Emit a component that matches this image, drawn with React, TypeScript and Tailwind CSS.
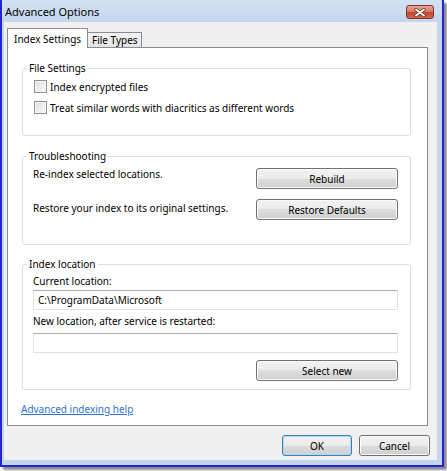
import React from "react";

const btnBase =
  "h-[21px] rounded-[3px] border flex items-center justify-center text-[10px] leading-none text-black bg-[linear-gradient(to_bottom,#f2f2f2_0%,#ebebeb_50%,#dddddd_50%,#cfcfcf_100%)]";

function Button({ label, w, def }: { label: string; w: string; def?: boolean }) {
  return (
    <div
      className={
        btnBase +
        " " +
        w +
        (def
          ? " border-[#3c7fb1] shadow-[inset_0_0_0_1px_#a6dcf6]"
          : " border-[#707070] shadow-[inset_0_0_0_1px_#fbfbfb]")
      }
    >
      {label}
    </div>
  );
}

function Checkbox({ label }: { label: string }) {
  return (
    <div className="h-[21px] flex items-center">
      <div className="w-[13px] h-[13px] border border-[#8e8f8f] bg-[linear-gradient(135deg,#dcdee2_0%,#f9f9f9_100%)] shadow-[inset_0_0_0_1px_#f6f6f6]" />
      <span className="ml-[3px] leading-[16px]">{label}</span>
    </div>
  );
}

function TextBox({ value }: { value?: string }) {
  return (
    <div className="w-[365px] h-[20px] border border-[#dfe3e8] border-t-[#abadb3] bg-white flex items-center pl-[4px] leading-none">
      {value}
    </div>
  );
}

export default function App() {
  return (
    <div className="w-[447px] h-[471px] bg-white font-['Noto_Sans',sans-serif] text-[10px] text-black">
      <div className="w-[444px] h-[467px] flex flex-col bg-[#c3d6ec] border-x-2 border-b-2 border-[#2323d8] shadow-[3px_3px_2px_rgba(0,0,0,0.45)]">
        {/* Title bar */}
        <div className="h-[22px] flex items-start justify-between pl-[3px] pr-[8px] bg-[linear-gradient(to_bottom,#d3e2f2,#c3d6ec)]">
          <div className="mt-[4px] leading-[16px] text-[11px]">Advanced Options</div>
          <div className="mt-[5px] w-[28px] h-[14px] rounded-[3px] border border-[#8a3329] bg-[linear-gradient(to_bottom,#e8a493_0%,#d47a68_45%,#c2412f_55%,#d06a4f_100%)] flex items-center justify-center">
            <svg width="12" height="9" viewBox="0 0 12 9">
              <path d="M2 1.5 L10 7.5 M10 1.5 L2 7.5" stroke="#5a2a25" strokeWidth="3.2" strokeLinecap="round" />
              <path d="M2 1.5 L10 7.5 M10 1.5 L2 7.5" stroke="#ffffff" strokeWidth="1.8" strokeLinecap="round" />
            </svg>
          </div>
        </div>
        {/* Client */}
        <div className="flex-1 ml-[2px] mr-[5px] mb-[5px] bg-[#f0f0f0] pl-[3px] pt-[6px] flex flex-col">
          {/* Tabs */}
          <div className="h-[19px] flex items-end">
            <div className="relative z-10 h-[20px] -mb-px w-[81px] border border-b-0 border-[#898c95] bg-white flex items-start pl-[6px] pt-[2px] leading-[16px]">
              Index Settings
            </div>
            <div className="h-[15px] w-[54px] border-t border-r border-[#898c95] bg-[linear-gradient(to_bottom,#f3f3f3,#e3e3e3)] flex items-start pl-[4px] leading-[14px]">
              File Types
            </div>
          </div>
          {/* Panel */}
          <div className="w-[421px] h-[379px] border border-[#898c95] bg-white flex flex-col pl-[14px]">
            {/* File Settings */}
            <fieldset className="mt-[12px] w-[389px] h-[76px] border border-[#d5dfe5] rounded-[3px] pl-[11px]">
              <legend className="-ml-[7px] px-[2px] leading-[16px]">File Settings</legend>
              <div className="flex flex-col">
                <Checkbox label="Index encrypted files" />
                <Checkbox label="Treat similar words with diacritics as different words" />
              </div>
            </fieldset>
            {/* Troubleshooting */}
            <fieldset className="mt-[12px] w-[389px] h-[97px] border border-[#d5dfe5] rounded-[3px] pl-[10px]">
              <legend className="-ml-[6px] px-[2px] leading-[16px]">Troubleshooting</legend>
              <div className="flex flex-col w-[365px]">
                <div className="flex items-start justify-between mt-[2px]">
                  <span className="leading-[16px]">Re-index selected locations.</span>
                  <div className="mt-[2px]">
                    <Button label="Rebuild" w="w-[142px]" />
                  </div>
                </div>
                <div className="flex items-start justify-between mt-[10px]">
                  <span className="leading-[16px] mt-[1px]">Restore your index to its original settings.</span>
                  <Button label="Restore Defaults" w="w-[142px]" />
                </div>
              </div>
            </fieldset>
            {/* Index location */}
            <fieldset className="mt-[11px] w-[389px] h-[134px] border border-[#d5dfe5] rounded-[3px] pl-[10px]">
              <legend className="-ml-[6px] px-[2px] leading-[16px]">Index location</legend>
              <div className="flex flex-col w-[365px]">
                <span className="leading-[16px] mt-[1px]">Current location:</span>
                <div className="mt-[1px]">
                  <TextBox value="C:\ProgramData\Microsoft" />
                </div>
                <span className="leading-[16px] mt-[3px]">New location, after service is restarted:</span>
                <div className="mt-[4px]">
                  <TextBox />
                </div>
                <div className="mt-[7px] flex justify-end">
                  <Button label="Select new" w="w-[142px]" />
                </div>
              </div>
            </fieldset>
            <div className="mt-[11px] -ml-px leading-[16px] text-[#3072c8] underline">Advanced indexing help</div>
          </div>
          {/* Buttons */}
          <div className="mt-[9px] flex justify-end gap-[7px] pr-[7px]">
            <Button label="OK" w="w-[70px]" def />
            <Button label="Cancel" w="w-[71px]" />
          </div>
        </div>
      </div>
    </div>
  );
}
